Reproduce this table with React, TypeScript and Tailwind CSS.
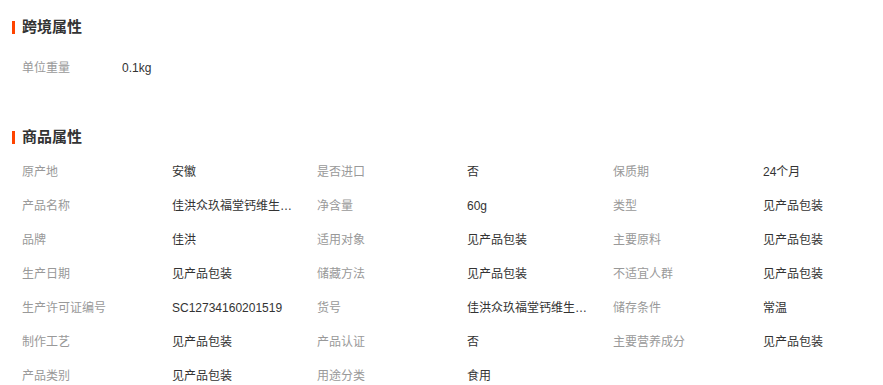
import React from "react";

const font = { fontFamily: '"Liberation Sans", "Noto Sans CJK SC", sans-serif' };

type Item = { label: string; value: string };

const items: Item[] = [
  { label: "原产地", value: "安徽" },
  { label: "是否进口", value: "否" },
  { label: "保质期", value: "24个月" },
  { label: "产品名称", value: "佳洪众玖福堂钙维生素D软糖" },
  { label: "净含量", value: "60g" },
  { label: "类型", value: "见产品包装" },
  { label: "品牌", value: "佳洪" },
  { label: "适用对象", value: "见产品包装" },
  { label: "主要原料", value: "见产品包装" },
  { label: "生产日期", value: "见产品包装" },
  { label: "储藏方法", value: "见产品包装" },
  { label: "不适宜人群", value: "见产品包装" },
  { label: "生产许可证编号", value: "SC12734160201519" },
  { label: "货号", value: "佳洪众玖福堂钙维生素D软糖" },
  { label: "储存条件", value: "常温" },
  { label: "制作工艺", value: "见产品包装" },
  { label: "产品认证", value: "否" },
  { label: "主要营养成分", value: "见产品包装" },
  { label: "产品类别", value: "见产品包装" },
  { label: "用途分类", value: "食用" },
];

function Header({ title }: { title: string }) {
  return (
    <div className="flex h-[20px] items-center pl-[12px]">
      <span className="mr-[7px] h-[13px] w-[3px] bg-[#ff4400]" />
      <span className="text-[15px] font-bold leading-[20px] text-[#333333]">{title}</span>
    </div>
  );
}

function Row({ label, value }: Item) {
  return (
    <div className="flex h-[34px] items-center text-[12px]">
      <span className="w-[150px] shrink-0 text-[#999999]">{label}</span>
      <span className="w-[125px] truncate text-[#333333]">{value}</span>
    </div>
  );
}

export default function App() {
  return (
    <div className="h-[385px] w-[883px] overflow-hidden bg-white" style={font}>
      <div className="pt-[17px]">
        <Header title="跨境属性" />
        <div className="mt-[14px] pl-[22px]">
          <div className="flex h-[34px] items-center text-[12px]">
            <span className="w-[100px] shrink-0 text-[#999999]">单位重量</span>
            <span className="text-[#333333]">0.1kg</span>
          </div>
        </div>
      </div>
      <div className="mt-[42px]">
        <Header title="商品属性" />
        <div className="mt-[8px] grid grid-cols-[295px_296px_1fr] pl-[22px]">
          {items.map((it, i) => (
            <Row key={i} label={it.label} value={it.value} />
          ))}
        </div>
      </div>
    </div>
  );
}
